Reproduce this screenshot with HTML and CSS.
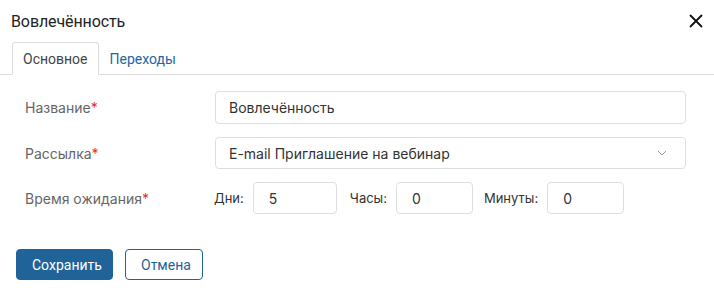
FILE: index.html
```html
<!DOCTYPE html>
<html lang="ru">
<head>
  <meta charset="UTF-8">
  <title>Вовлечённость</title>
  <link rel="stylesheet" href="styles.css">
</head>
<body>
  <div class="dialog">
    <div class="dialog-header">
      <h1>Вовлечённость</h1>
      <button type="button" class="close" aria-label="Закрыть">
        <svg width="16" height="16" viewBox="0 0 16 16"><path d="M2 2L14 14M14 2L2 14" stroke="#111" stroke-width="1.8" fill="none"/></svg>
      </button>
    </div>

    <div class="tabs">
      <span class="tab active">Основное</span>
      <span class="tab">Переходы</span>
    </div>

    <form class="form" autocomplete="off">
      <div class="row">
        <label class="label">Название<span class="req">*</span></label>
        <input type="text" class="field" value="Вовлечённость">
      </div>
      <div class="row">
        <label class="label">Рассылка<span class="req">*</span></label>
        <div class="field select">
          <span>E-mail Приглашение на вебинар</span>
          <svg width="10" height="6" viewBox="0 0 10 6"><path d="M1 1L5 5L9 1" stroke="#999" stroke-width="1" fill="none"/></svg>
        </div>
      </div>
      <div class="row">
        <label class="label">Время ожидания<span class="req">*</span></label>
        <div class="time">
          <span class="unit">Дни:</span>
          <input type="text" class="field days" value="5">
          <span class="unit">Часы:</span>
          <input type="text" class="field small" value="0">
          <span class="unit">Минуты:</span>
          <input type="text" class="field small" value="0">
        </div>
      </div>
    </form>

    <div class="actions">
      <button type="button" class="btn primary">Сохранить</button>
      <button type="button" class="btn outline">Отмена</button>
    </div>
  </div>
</body>
</html>
```

FILE: styles.css
```css
body {
  margin: 0;
  font-family: Inter, 'Noto Sans', sans-serif;
  color: #333;
  background: #fff;
}
.dialog {
  width: 714px;
}
.dialog-header {
  display: flex;
  align-items: center;
  justify-content: space-between;
  height: 42px;
  padding: 0 11px;
  box-sizing: border-box;
}
.dialog-header h1 {
  margin: 0;
  font-family: Roboto, 'Liberation Sans', sans-serif;
  font-weight: 400;
  font-size: 16px;
  color: #222;
  letter-spacing: -0.1px;
}
.close {
  background: none;
  border: none;
  padding: 0;
  margin-right: -1px;
  display: flex;
  cursor: pointer;
}
.tabs {
  display: flex;
  height: 32px;
  padding-left: 12px;
  border-bottom: 1px solid #dcdcdc;
}
.tab {
  display: flex;
  align-items: center;
  padding: 0 10px;
  font-family: Roboto, 'Liberation Sans', sans-serif;
  font-size: 14px;
  color: #1d65a6;
  margin-bottom: -1px;
  border: 1px solid transparent;
  border-radius: 3px 3px 0 0;
}
.tab.active {
  color: #444;
  background: #fff;
  border-color: #dcdcdc;
  border-bottom-color: #fff;
}
.form {
  padding: 16px 28px 0 25px;
  display: flex;
  flex-direction: column;
  gap: 13px;
}
.row {
  display: flex;
  align-items: center;
}
.label {
  width: 190px;
  font-size: 14px;
  color: #666;
}
.req {
  color: #e0302a;
}
.field {
  box-sizing: border-box;
  height: 33px;
  border: 1px solid #dedede;
  border-radius: 4px;
  padding: 0 13px;
  font-family: Inter, 'Noto Sans', sans-serif;
  font-size: 14px;
  color: #333;
  background: #fff;
  outline: none;
  width: 471px;
}
.select {
  height: 32px;
  display: flex;
  align-items: center;
  justify-content: space-between;
  padding: 0 18px 0 13px;
}
.time {
  display: flex;
  align-items: center;
  margin-left: -1px;
}
.unit {
  font-size: 13px;
  color: #333;
  margin-right: 9px;
}
.field.days {
  width: 84px;
  height: 32px;
  padding-left: 15px;
  margin-right: 13px;
}
.field.small {
  width: 77px;
  height: 32px;
  padding-left: 15px;
  margin-right: 11px;
}
.actions {
  display: flex;
  gap: 12px;
  padding: 35px 0 0 16px;
}
.btn {
  height: 31px;
  border-radius: 4px;
  font-family: Roboto, 'Liberation Sans', sans-serif;
  font-size: 14px;
  padding: 0 15px;
  cursor: pointer;
}
.btn.primary {
  background: #1f6399;
  border: 1px solid #1f6399;
  color: #fff;
  width: 97px;
}
.btn.outline {
  background: #fff;
  border: 1px solid #1f6399;
  color: #1f6399;
  width: 78px;
}
```
